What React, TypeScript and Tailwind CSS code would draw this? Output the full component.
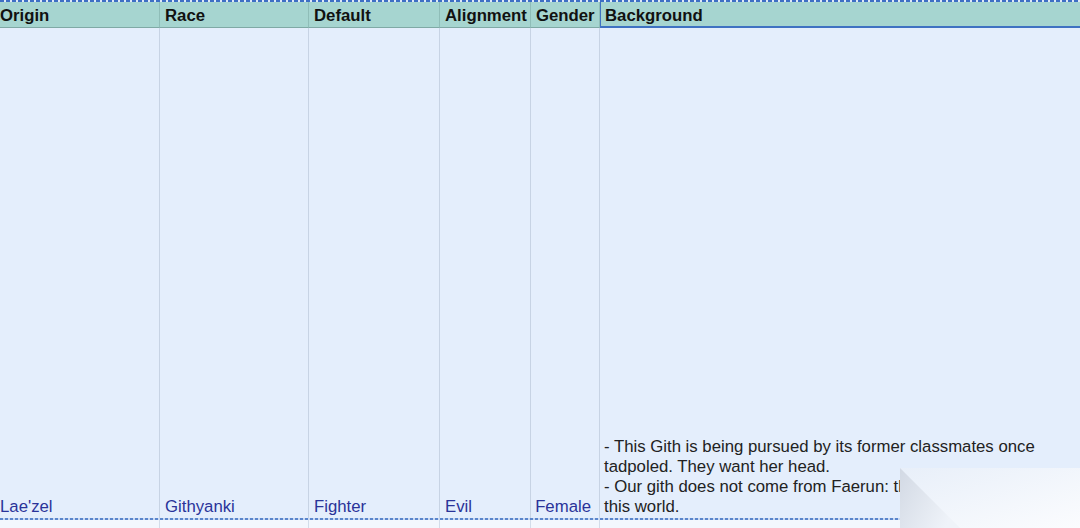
import React from 'react'

const columns = [
  { title: 'Origin', width: 'w-[160px]', pad: 'pl-0' },
  { title: 'Race', width: 'w-[149px]', pad: 'pl-[5px]' },
  { title: 'Default', width: 'w-[131px]', pad: 'pl-[5px]' },
  { title: 'Alignment', width: 'w-[91px]', pad: 'pl-[5px]' },
  { title: 'Gender', width: 'w-[69px]', pad: 'pl-[5px]' },
]

const row = ["Lae'zel", 'Githyanki', 'Fighter', 'Evil']

export default function App() {
  return (
    <div className="relative w-[1080px] h-[528px] overflow-hidden bg-[#eef3fb] font-['Liberation_Sans',Arial,sans-serif]">
      {/* dashed copy marquee, top */}
      <div className="h-[2px] w-full bg-[repeating-linear-gradient(90deg,#3d6fc4_0_4px,#dfe9f8_4px_6px)]" />

      {/* Header */}
      <div className="flex h-[26px] bg-[#a6d5d0] text-[16.75px] font-bold text-[#111]">
        {columns.map((c) => (
          <div
            key={c.title}
            className={`${c.width} ${c.pad} flex items-center pt-[3px] border-r border-b border-r-[#8fbdb8] border-b-[#7fa9a5] whitespace-nowrap`}
          >
            {c.title}
          </div>
        ))}
        <div className="flex-1 flex items-center pt-[4px] pl-[4px] border-l border-b-2 border-[#3f72c2]">
          Background
        </div>
      </div>

      {/* Data row */}
      <div className="flex h-[490px] bg-[#e4eefc] text-[16.75px] leading-[20px]">
        {columns.slice(0, 4).map((c, i) => (
          <div
            key={c.title}
            className={`${c.width} ${c.pad} flex items-end pb-[1px] border-r border-[#c7d3e4] text-[#2a3399]`}
          >
            {row[i]}
          </div>
        ))}
        <div className="w-[69px] flex items-end justify-end pr-[8px] pb-[1px] border-r border-[#c7d3e4] text-[#2a3399]">
          Female
        </div>
        <div className="flex-1 flex items-end pl-[4px] pr-[30px] pb-[1px] text-[#222]">
          <p>
            - This Gith is being pursued by its former classmates once tadpoled. They want her head.
            <br />
            - Our gith does not come from Faerun: they are strangers to this world.
          </p>
        </div>
      </div>

      {/* dashed copy marquee, bottom */}
      <div className="h-[2px] w-full bg-[repeating-linear-gradient(90deg,#5b86cc_0_3px,#c9d9f2_3px_5px)]" />

      {/* Next row peeking */}
      <div className="flex h-[10px] bg-[#f3f7fd]">
        {columns.map((c) => (
          <div key={c.title} className={`${c.width} border-r border-[#d3ddea]`} />
        ))}
      </div>

      {/* page curl in the corner */}
      <svg className="absolute right-0 bottom-0" width="180" height="62" viewBox="0 0 180 62">
        <defs>
          <linearGradient id="paper" x1="0" y1="0" x2="1" y2="1">
            <stop offset="0" stopColor="#e8eff9" />
            <stop offset="1" stopColor="#fbfcfe" />
          </linearGradient>
          <linearGradient id="shade" x1="0" y1="0" x2="1" y2="0.5">
            <stop offset="0" stopColor="#d2d9e4" />
            <stop offset="1" stopColor="#eff3f9" />
          </linearGradient>
        </defs>
        <rect x="0" y="2" width="180" height="60" fill="url(#paper)" />
        <polygon points="0,2 0,62 60,62" fill="url(#shade)" />
      </svg>
    </div>
  )
}
